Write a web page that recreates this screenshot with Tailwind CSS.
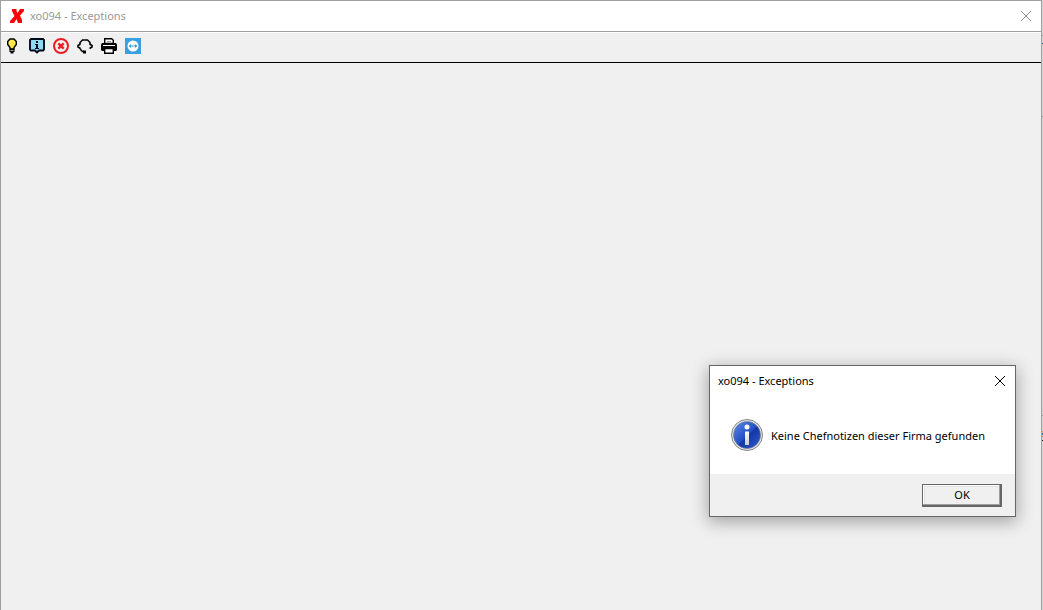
<!DOCTYPE html>
<html lang="de">
<head>
    <meta charset="UTF-8">
    <meta name="viewport" content="width=device-width, initial-scale=1.0">
    <title>xo094 - Exceptions</title>
    <script src="https://cdn.jsdelivr.net/npm/@tailwindcss/browser@4"></script>
</head>
<body class="relative flex h-screen overflow-hidden bg-[#d4d4d4] font-['Noto_Sans','Open_Sans',sans-serif] text-[11px] leading-4">
    <!-- Main window -->
    <div class="flex flex-1 flex-col border-x border-t border-[#a0a0a0] bg-[#f0f0f0]">
        <header class="flex h-[31px] items-center border-b border-[#a0a0a0] bg-white pr-2.5 pl-2">
            <svg class="mr-[5px] h-4 w-4" viewBox="0 0 16 16" fill="#f00" aria-hidden="true">
                <path d="M3 1h4.500v2l1 2L11 1h4v2l-4 4.500 2 4.500v3H9l-1.500-4L5 15H1v-2l4.500-5L3 3z"/>
            </svg>
            <h1 class="flex-1 text-[#999]">xo094 - Exceptions</h1>
            <button type="button" aria-label="Schließen" class="text-[#8c8c8c]">
                <svg class="h-2.5 w-2.5" viewBox="0 0 10 10" fill="none" stroke="currentColor"><path d="M0 0l10 10M10 0L0 10"/></svg>
            </button>
        </header>
        <div class="flex h-[31px] items-start gap-2 border-t border-b border-t-white border-b-black pt-[5px] pl-1">
            <button type="button" aria-label="Tipp">
                <svg class="h-4 w-4" viewBox="0 0 16 16">
                    <path d="M5 1h4l2.300 2.500v3L9 9.500V11H5V9.500L2.700 6.500v-3z" fill="#ffe54a" stroke="#000" stroke-width="1.400"/>
                    <path d="M5 4.500L6 3.500" stroke="#fff"/>
                    <path d="M4.500 11h5v3H8.500v1.500h-3V14h-1z" fill="#000"/>
                    <path d="M5.500 12.500h3" stroke="#aaa"/>
                </svg>
            </button>
            <button type="button" aria-label="Info">
                <svg class="h-4 w-4" viewBox="0 0 16 16">
                    <path d="M2 1h12l1 1v9.500l-1 1h-4l-2 2-2-2H2l-1-1V2z" fill="#8fd8f0" stroke="#000b1c" stroke-width="1.900" stroke-linejoin="round"/>
                    <path d="M7 3h2v2H7zM6 6h3v4h1v1H6v-1h1V7H6z" fill="#000b1c"/>
                </svg>
            </button>
            <button type="button" aria-label="Abbrechen">
                <svg class="h-4 w-4" viewBox="0 0 16 16" fill="none" stroke="#ed1c24" stroke-width="2">
                    <circle cx="8" cy="8" r="7"/>
                    <path d="M5.300 5.300l5.400 5.400M10.700 5.300l-5.400 5.400" stroke-width="2.400"/>
                </svg>
            </button>
            <button type="button" aria-label="Support">
                <svg class="h-4 w-4" viewBox="0 0 16 16" fill="none" stroke="#000" stroke-width="1.500">
                    <path d="M3 6V4.500L5.500 2h5L13 4.500V6"/>
                    <path d="M3.500 6L1 7.500v1.500l2.500 1.500M12.500 6L15 7.500v1.500L12.500 10.500" stroke-width="1.600"/>
                    <path d="M3.500 10.500v1L5.500 13.500h1.500"/>
                    <path d="M6 12.500h3v3H6z" fill="#000" stroke="none"/>
                </svg>
            </button>
            <button type="button" aria-label="Drucken">
                <svg class="h-4 w-4" viewBox="0 0 16 16">
                    <path d="M1 5h14l1 1.500V12l-1 1H1l-1-1V6.500z" fill="#000"/>
                    <path d="M3.700 5.500V.7h7l1.600 1.600v3.200z" fill="#fff" stroke="#000" stroke-width="1.400"/>
                    <path d="M6 3.500h4" stroke="#999"/>
                    <path d="M2 7.500h12" stroke="#fff"/>
                    <path d="M3.700 10.500h8.600v4.800H3.700z" fill="#fff" stroke="#000" stroke-width="1.400"/>
                </svg>
            </button>
            <button type="button" aria-label="Fernwartung">
                <svg class="h-4 w-4" viewBox="0 0 16 16">
                    <path d="M0 0h16v16H0z" fill="#38a0e0"/>
                    <circle cx="8" cy="8" r="5.500" fill="#fff"/>
                    <path d="M3.500 8L6 6v1.500h4V6l2.500 2L10 10V8.500H6V10z" fill="#38a0e0"/>
                </svg>
            </button>
        </div>
        <main class="flex-1"></main>
    </div>

    <!-- Edge of the window behind -->
    <svg class="h-full w-px" aria-hidden="true">
        <path d="M0 35.500h1M0 116.500h1M0 415.500h1" stroke="#999"/>
        <path d="M0 43.500h1" stroke="#34586e"/>
        <path d="M0 431.500h1" stroke="#c8a060"/>
        <path d="M0 434h1" stroke="#2878b0" stroke-width="2"/>
        <path d="M0 436.500h1" stroke="#c87830"/>
        <path d="M0 440.500h1" stroke="#222"/>
    </svg>

    <!-- Message box -->
    <div role="dialog" aria-labelledby="dialogTitle" aria-describedby="dialogText" class="absolute top-[365px] right-[27px] w-[307px] border border-[#666] bg-white text-black shadow-[0_4px_16px_1px_rgba(0,0,0,0.32)]">
        <div class="flex h-[29px] items-center justify-between pr-2.5 pl-2">
            <h2 id="dialogTitle">xo094 - Exceptions</h2>
            <button type="button" aria-label="Schließen">
                <svg class="h-2.5 w-2.5" viewBox="0 0 10 10" fill="none" stroke="#000"><path d="M0 0l10 10M10 0L0 10"/></svg>
            </button>
        </div>
        <div class="flex h-[79px] items-center gap-2 px-[21px]">
            <svg class="h-8 w-8 shrink-0" viewBox="0 0 32 32" aria-hidden="true">
                <defs>
                    <linearGradient id="ball" x1="0" y1="0" x2="1" y2="1">
                        <stop offset="0" stop-color="#5b8ce8"/>
                        <stop offset="0.5" stop-color="#2450c4"/>
                        <stop offset="0.55" stop-color="#1636a4"/>
                        <stop offset="1" stop-color="#2f5fd4"/>
                    </linearGradient>
                    <linearGradient id="stem" x1="0" y1="0" x2="0" y2="1">
                        <stop offset="0" stop-color="#fff"/>
                        <stop offset="1" stop-color="#ccc"/>
                    </linearGradient>
                </defs>
                <circle cx="16" cy="16" r="15.500" fill="#e4e4e4" stroke="#858585"/>
                <circle cx="16" cy="16" r="13.500" fill="url(#ball)" stroke="#6f7890" stroke-width="0.600"/>
                <circle cx="16" cy="8" r="2.500" fill="#fff"/>
                <path d="M14 12.500h4v13.500h-4z" fill="url(#stem)"/>
            </svg>
            <p id="dialogText" class="pt-0.5 whitespace-nowrap">Keine Chefnotizen dieser Firma gefunden</p>
        </div>
        <div class="flex justify-end bg-[#f0f0f0] pt-2.5 pr-[13px] pb-[9px]">
            <button type="button" class="h-[23px] w-20 border border-[#666] bg-[#f0f0f0] pb-0.5 shadow-[inset_-1px_-1px_0_#666,inset_-2px_-2px_0_#a0a0a0,inset_1px_1px_0_#fff,inset_2px_2px_0_#e3e3e3]">OK</button>
        </div>
    </div>
</body>
</html>
